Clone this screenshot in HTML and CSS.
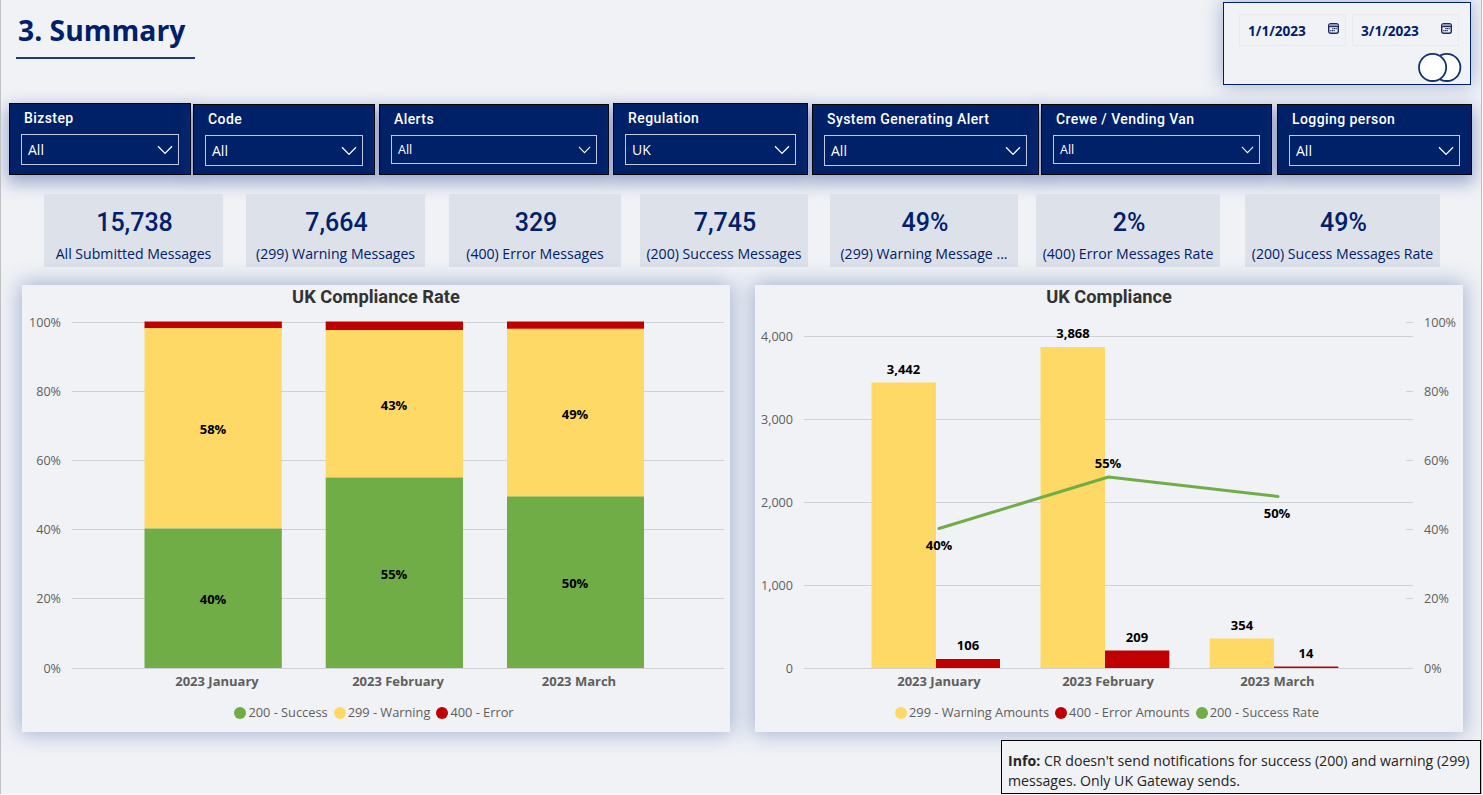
FILE: index.html
```
<!DOCTYPE html>
<html lang="en">
<head>
<meta charset="UTF-8">
<title>3. Summary</title>
<link rel="stylesheet" href="styles.css">
</head>
<body>
<svg class="defs">
  <symbol id="calendar" viewBox="0 0 11 11">
    <rect x="0.7" y="0.7" width="9.6" height="9.6" rx="2" fill="#f4f5f9" stroke="#1b2a62" stroke-width="1.4"/>
    <path d="M1.2 3V2Q1.2 1.2 2 1.2H9Q9.8 1.2 9.8 2V3Z" fill="#8f98b8"/>
    <path d="M0.6 3.6H10.4" stroke="#1b2a62" stroke-width="1.2"/>
    <path d="M4.2 5.6H8.8M2.2 7.6H6.8" stroke="#1b2a62" stroke-width="1.3" stroke-dasharray="1.2 0.5"/>
  </symbol>
  <symbol id="chevron" viewBox="0 0 16 10">
    <path d="M1 1.2L8 8.4L15 1.2" fill="none" stroke="#fff" stroke-width="1.3"/>
  </symbol>
</svg>

<div class="page">
  <header>
    <h1>3. Summary</h1>
    <div class="dates">
      <div class="date-inputs">
        <div class="date">1/1/2023<svg><use href="#calendar"/></svg></div>
        <div class="date">3/1/2023<svg><use href="#calendar"/></svg></div>
      </div>
      <svg class="slider" width="246" height="32">
        <path d="M29 15.4H210" stroke="#f1f1ec" stroke-width="2"/>
        <circle cx="222.8" cy="15.4" r="13.6"/>
        <circle cx="208.6" cy="15.4" r="13.6"/>
      </svg>
    </div>
  </header>

  <div class="filters">
    <div class="filter bizstep"><label>Bizstep</label><div class="select">All<svg><use href="#chevron"/></svg></div></div>
    <div class="filter code"><label>Code</label><div class="select">All<svg><use href="#chevron"/></svg></div></div>
    <div class="filter alerts small"><label>Alerts</label><div class="select">All<svg><use href="#chevron"/></svg></div></div>
    <div class="filter regulation"><label>Regulation</label><div class="select">UK<svg><use href="#chevron"/></svg></div></div>
    <div class="filter system"><label>System Generating Alert</label><div class="select">All<svg><use href="#chevron"/></svg></div></div>
    <div class="filter crewe small"><label>Crewe / Vending Van</label><div class="select">All<svg><use href="#chevron"/></svg></div></div>
    <div class="filter logging"><label>Logging person</label><div class="select">All<svg><use href="#chevron"/></svg></div></div>
  </div>

  <div class="cards">
    <div class="card submitted"><b>15,738</b><span>All Submitted Messages</span></div>
    <div class="card warnings"><b>7,664</b><span>(299) Warning Messages</span></div>
    <div class="card errors"><b>329</b><span>(400) Error Messages</span></div>
    <div class="card successes"><b>7,745</b><span>(200) Success Messages</span></div>
    <div class="card warning-rate"><b>49%</b><span>(299) Warning Message ...</span></div>
    <div class="card error-rate"><b>2%</b><span>(400) Error Messages Rate</span></div>
    <div class="card success-rate"><b>49%</b><span>(200) Sucess Messages Rate</span></div>
  </div>

  <div class="charts">
    <div class="chart">
      <h2>UK Compliance Rate</h2>
      <svg class="plot" width="708" height="383">
        <path class="grid" d="M50 13.5H702M50 82.5H702M50 151.5H702M50 220.5H702M50 289.5H702M50 359.5H702"/>
        <g class="axis end">
          <text x="39" y="18">100%</text>
          <text x="39" y="87">80%</text>
          <text x="39" y="156">60%</text>
          <text x="39" y="225">40%</text>
          <text x="39" y="294">20%</text>
          <text x="39" y="364">0%</text>
        </g>
        <g class="error">
          <rect x="122.5" y="12.5" width="137.3" height="7"/>
          <rect x="303.7" y="12.5" width="137.3" height="9"/>
          <rect x="485" y="12.5" width="137" height="7.5"/>
        </g>
        <g class="warning">
          <rect x="122.5" y="19" width="137.3" height="200.5"/>
          <rect x="303.7" y="21" width="137.3" height="147.5"/>
          <rect x="485" y="19.7" width="137" height="168"/>
        </g>
        <g class="success">
          <rect x="122.5" y="219.5" width="137.3" height="139.5"/>
          <rect x="303.7" y="168.5" width="137.3" height="190.5"/>
          <rect x="485" y="187.5" width="137" height="171.5"/>
        </g>
        <g class="value">
          <text x="191" y="125">58%</text>
          <text x="372" y="101">43%</text>
          <text x="553" y="110">49%</text>
          <text x="191" y="295">40%</text>
          <text x="372" y="270">55%</text>
          <text x="553" y="279">50%</text>
        </g>
        <g class="month">
          <text x="195" y="377">2023 January</text>
          <text x="376" y="377">2023 February</text>
          <text x="557" y="377">2023 March</text>
        </g>
      </svg>
      <div class="legend">
        <span><i class="green"></i>200 - Success</span>
        <span><i class="yellow"></i>299 - Warning</span>
        <span><i class="red"></i>400 - Error</span>
      </div>
    </div>

    <div class="chart">
      <h2>UK Compliance</h2>
      <svg class="plot" width="708" height="383">
        <path class="grid" d="M49 27.5H658M49 110.5H658M49 193.5H658M49 276.5H658M49 359.5H658"/>
        <path class="grid" d="M651 13.5H658M651 82.5H658M651 151.5H658M651 220.5H658M651 289.5H658"/>
        <g class="axis end">
          <text x="38" y="32">4,000</text>
          <text x="38" y="115">3,000</text>
          <text x="38" y="198">2,000</text>
          <text x="38" y="281">1,000</text>
          <text x="38" y="364">0</text>
        </g>
        <g class="axis">
          <text x="669" y="18">100%</text>
          <text x="669" y="87">80%</text>
          <text x="669" y="156">60%</text>
          <text x="669" y="225">40%</text>
          <text x="669" y="294">20%</text>
          <text x="669" y="364">0%</text>
        </g>
        <g class="warning">
          <rect x="116.5" y="73.5" width="64.5" height="285.5"/>
          <rect x="285.5" y="38" width="64.5" height="321"/>
          <rect x="454.7" y="329.5" width="64.3" height="29.5"/>
        </g>
        <g class="error">
          <rect x="181" y="350" width="64" height="9"/>
          <rect x="350" y="341.5" width="64.3" height="17.5"/>
          <rect x="519" y="357.5" width="64.3" height="1.5"/>
        </g>
        <polyline class="rate" points="184,219.5 353.5,168 523,187.5"/>
        <g class="value">
          <text x="148.5" y="65">3,442</text>
          <text x="318" y="29">3,868</text>
          <text x="487" y="321">354</text>
          <text x="213" y="341">106</text>
          <text x="382" y="333">209</text>
          <text x="551" y="349">14</text>
          <text x="184" y="241">40%</text>
          <text x="353" y="159">55%</text>
          <text x="522" y="209">50%</text>
        </g>
        <g class="month">
          <text x="184" y="377">2023 January</text>
          <text x="353" y="377">2023 February</text>
          <text x="522.5" y="377">2023 March</text>
        </g>
      </svg>
      <div class="legend">
        <span><i class="yellow"></i>299 - Warning Amounts</span>
        <span><i class="red"></i>400 - Error Amounts</span>
        <span><i class="green"></i>200 - Success Rate</span>
      </div>
    </div>
  </div>

  <div class="info"><b>Info:</b> CR doesn't send notifications for success (200) and warning (299)<br>messages. Only UK Gateway sends.</div>
</div>
</body>
</html>
```
FILE: styles.css
```
* { box-sizing: border-box; }
body { margin: 0; background: #fff; font-family: "Open Sans", "Noto Sans", sans-serif; overflow: hidden; }
.defs { display: none; }
.page { width: 1482px; height: 794px; background: #f0f2f6; border: solid #bfc0c3; border-width: 0 1px; overflow: hidden; }

header { display: flex; justify-content: space-between; align-items: flex-start; height: 103px; padding: 2px 10px 0 15px; }
h1 { margin: 7px 0 0; width: 179px; height: 50px; padding-left: 2px; border-bottom: 2px solid #1f3a7a; color: #00206a; font-size: 28.3px; line-height: 43px; white-space: nowrap; }
.dates { width: 248px; height: 83px; border: 1px solid #00206a; padding: 11px 0 0 15px; box-shadow: 0 0 18px 1px rgba(60, 90, 160, 0.4); }
.date-inputs { display: flex; gap: 6px; }
.date { display: flex; align-items: center; justify-content: space-between; width: 107px; height: 32px; padding: 0 6px 0 8px; border: 1px solid #eaeaec; color: #00206a; font-size: 13.6px; font-weight: 700; }
.date svg { width: 11px; height: 11px; margin-bottom: 4px; }
.slider { display: block; margin: 6px 0 0 -15px; overflow: visible; }
.slider circle { fill: #fff; stroke: #12306f; stroke-width: 1.8; }

.filters { display: flex; align-items: flex-start; height: 72px; padding-left: 8px; }
.filter { height: 71px; margin-top: 1px; padding: 5px 11px 0; background: #002068; border: 1px solid #000; color: #fff; box-shadow: 0 6px 16px 2px rgba(40, 70, 145, 0.42); }
.filter label { display: block; height: 25px; padding-left: 3px; font: 500 14px/18px Roboto, sans-serif; letter-spacing: 0.42px; white-space: nowrap; }
.select { display: flex; align-items: center; justify-content: space-between; height: 31px; padding: 0 5px 0 6px; border: 1px solid #c5cbdc; font-size: 14px; }
.select svg { width: 16px; height: 10px; }
.small .select { height: 29px; font-size: 12.5px; }
.small .select svg { width: 13px; height: 8px; }
.bizstep { width: 182px; height: 72px; margin-top: 0; }
.code { width: 182px; margin-left: 2px; }
.alerts { width: 230px; margin-left: 4px; }
.regulation { width: 195px; height: 72px; margin: 0 0 0 4px; }
.system { width: 227px; margin-left: 4px; }
.crewe { width: 231px; margin-left: 2px; }
.logging { width: 195px; margin-left: 5px; }

.cards { display: flex; height: 73px; margin: 19px 0 0 43px; }
.card { display: flex; flex-direction: column; align-items: center; background: #dde1e9; color: #00206a; white-space: nowrap; }
.card b { margin-top: 12px; padding-left: 2px; font: 500 25px/34px Roboto, sans-serif; }
.card span { font-size: 14.1px; line-height: 28px; }
.submitted { width: 179px; }
.warnings { width: 179px; margin-left: 23px; }
.errors { width: 172px; margin-left: 24px; }
.successes { width: 168px; margin-left: 19px; }
.warning-rate { width: 188px; margin-left: 22px; }
.error-rate { width: 184px; margin-left: 18px; }
.success-rate { width: 195px; margin-left: 25px; }

.charts { display: flex; gap: 25px; padding: 18px 0 0 21px; }
.chart { width: 708px; height: 447px; background: #f0f2f6; box-shadow: 0 0 20px 2px rgba(60, 90, 160, 0.42); }
.chart h2 { margin: 0; height: 24px; color: #333; font: 700 18.3px/24px Roboto, sans-serif; text-align: center; }
.plot { display: block; }
.grid { fill: none; stroke: #cfd1d4; }
.axis { fill: #605e5c; font-size: 12.6px; }
.end { text-anchor: end; }
.value { fill: #000; font-size: 13px; font-weight: 700; text-anchor: middle; }
.month { fill: #605e5c; font-size: 13px; font-weight: 700; text-anchor: middle; }
.success { fill: #70ad47; }
.warning { fill: #ffd966; }
.error { fill: #c00000; }
.rate { fill: none; stroke: #70ad47; stroke-width: 3; stroke-linecap: round; stroke-linejoin: round; }
.legend { display: flex; justify-content: center; gap: 6px; padding-right: 4px; color: #605e5c; font-size: 12.8px; line-height: 41px; }
.legend span { display: flex; align-items: center; }
.legend i { width: 12px; height: 12px; margin-right: 2px; border-radius: 50%; }
.green { background: #70ad47; }
.yellow { background: #ffd966; }
.red { background: #c00000; }

.info { position: relative; width: 480px; height: 54px; margin: 8px 0 0 1000px; padding: 10px 6px; border: 1px solid #000; background: #f0f2f6; color: #252423; font-size: 14.15px; line-height: 20px; white-space: nowrap; }
```
